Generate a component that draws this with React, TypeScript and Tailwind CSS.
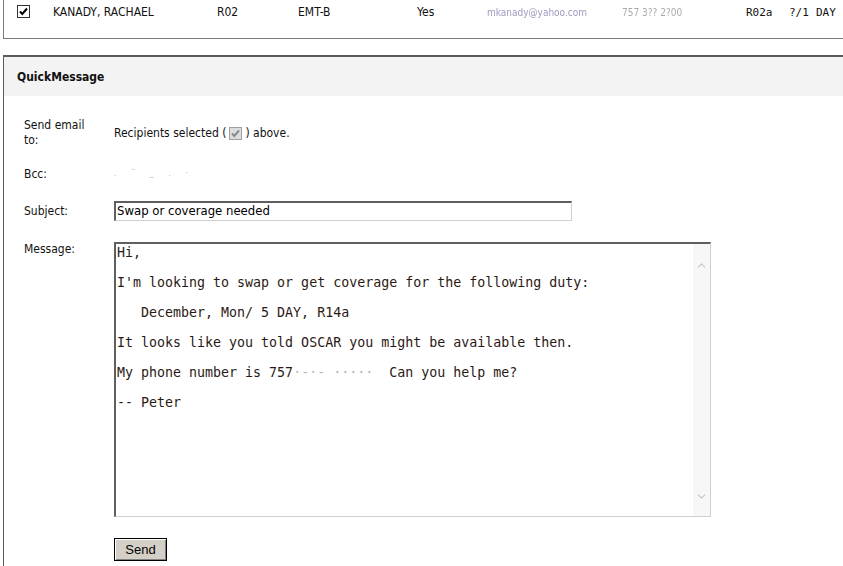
import { ChevronUp, ChevronDown } from "lucide-react";

const ui = { fontFamily: '"DejaVu Sans Condensed", "DejaVu Sans", sans-serif' };
const mono = { fontFamily: '"DejaVu Sans Mono", "Liberation Mono", monospace' };

const messageLines = [
  "Hi,",
  "",
  "I'm looking to swap or get coverage for the following duty:",
  "",
  "   December, Mon/ 5 DAY, R14a",
  "",
  "It looks like you told OSCAR you might be available then.",
  "",
  "My phone number is 757",
  "",
  "-- Peter",
];

const Check = ({ muted }: { muted?: boolean }) => (
  <svg viewBox="0 0 13 13" className="w-[13px] h-[13px]">
    <rect
      x="0.5"
      y="0.5"
      width="12"
      height="12"
      fill={muted ? "#dcdcdc" : "#fff"}
      stroke={muted ? "#a0a0a0" : "#333"}
    />
    <path
      d="M3 6.5L5.3 9L10 3.5"
      fill="none"
      stroke={muted ? "#8a8a8a" : "#000"}
      strokeWidth="2"
    />
  </svg>
);

export default function App() {
  return (
    <div className="w-[843px] h-[566px] overflow-hidden bg-white text-[12px] text-[#111]" style={ui}>
      {/* selected member row */}
      <div className="ml-[3px] h-[39px] border-l border-b border-[#7a7a7a] flex items-start pt-[5px]">
        <div className="w-[49px] pl-[13px]">
          <Check />
        </div>
        <div className="w-[164px] leading-[15px]">KANADY, RACHAEL</div>
        <div className="w-[81px] leading-[15px]">R02</div>
        <div className="w-[119px] leading-[15px]">EMT-B</div>
        <div className="w-[70px] leading-[15px]">Yes</div>
        <div className="w-[135px] leading-[15px] text-[10px] text-[#5a5494] opacity-60 blur-[0.5px]">mkanady@yahoo.com</div>
        <div className="w-[124px] leading-[15px] text-[10px] text-[#555] opacity-50 blur-[0.5px]">757 3?? 2?00</div>
        <div className="w-[43px] leading-[15px] text-[11px]" style={mono}>R02a</div>
        <div className="w-[27px] leading-[15px] text-[11px]" style={mono}>?/1</div>
        <div className="leading-[15px] text-[11px]" style={mono}>DAY</div>
      </div>

      {/* QuickMessage panel */}
      <div className="ml-[3px] mt-[16px] border-t-2 border-l border-[#5a5a5a] h-[520px]">
        <div className="h-[39px] bg-[#f3f3f3] flex items-center pl-[13px] font-bold">QuickMessage</div>

        <div className="pl-[20px] pt-[22px]">
          <div className="flex items-center">
            <div className="w-[90px] leading-[15px]">
              Send email
              <br />
              to:
            </div>
            <div className="flex items-center gap-[3px]">
              <span>Recipients selected (</span>
              <Check muted />
              <span>) above.</span>
            </div>
          </div>

          <div className="flex items-center mt-[18px] h-[15px]">
            <div className="w-[90px]">Bcc:</div>
            <div className="text-[9px] text-[#888] opacity-60 tracking-[6px]">. ¨ _ . ·</div>
          </div>

          <div className="flex items-center mt-[20px]">
            <div className="w-[90px]">Subject:</div>
            <div className="w-[458px] h-[20px] border-t-2 border-l-2 border-r border-b border-t-[#5f5f5f] border-l-[#5f5f5f] border-r-[#d4d0c8] border-b-[#d4d0c8] pl-[1px] text-[13px] leading-[16px] text-black">
              Swap or coverage needed
            </div>
          </div>

          <div className="flex items-start mt-[21px]">
            <div className="w-[90px] leading-[15px]">Message:</div>
            <div className="w-[597px] h-[275px] flex border-t-2 border-l-2 border-r border-b border-t-[#5f5f5f] border-l-[#5f5f5f] border-r-[#d4d0c8] border-b-[#d4d0c8]">
              <div className="flex-1 pl-[1px] pt-[1px] text-[13.3px] leading-[15px] text-[#2b1a14] whitespace-pre" style={mono}>
                {messageLines.map((line, i) => (
                  <div key={i} className="h-[15px]">
                    {line}
                    {i === 8 && (
                      <>
                        <span className="text-[#b8b8b8]">·-·- ·····</span>
                        {"  Can you help me?"}
                      </>
                    )}
                  </div>
                ))}
              </div>
              <div className="w-[17px] bg-[#f7f7f7] flex flex-col items-center justify-between pt-[15px] pb-[13px]">
                <ChevronUp size={13} strokeWidth={2} className="text-[#c4c4c4]" />
                <ChevronDown size={13} strokeWidth={2} className="text-[#c4c4c4]" />
              </div>
            </div>
          </div>

          <div className="pl-[90px] mt-[21px]">
            <button
              className="w-[53px] h-[23px] border border-black bg-[#d4d0c8] shadow-[inset_1px_1px_0_#fff,inset_-1px_-1px_0_#808080] text-[13px] text-black"
              style={{ fontFamily: '"Liberation Sans", Arial, sans-serif' }}
            >
              Send
            </button>
          </div>
        </div>
      </div>
    </div>
  );
}
